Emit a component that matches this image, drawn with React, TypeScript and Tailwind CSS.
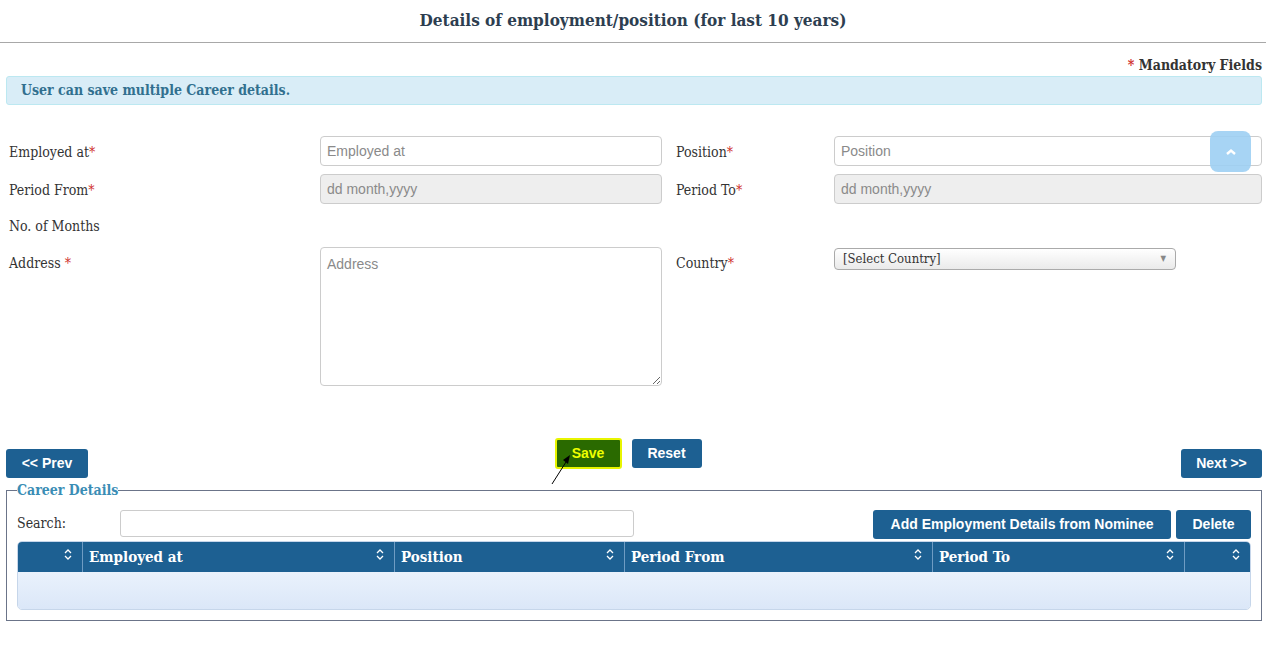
import React from "react";

const slab = "font-['DejaVu_Serif_Condensed','DejaVu_Serif',serif]";
const sans = "font-['Liberation_Sans',Arial,sans-serif]";

/** 必須マーク */
function Req() {
  return <span className="text-[#d0312d]">*</span>;
}

/** テーブル見出しのソートアイコン */
function SortIcon() {
  return (
    <svg width="8" height="11" viewBox="0 0 8 11" className="shrink-0">
      <path d="M1 4 L4 1 L7 4" fill="none" stroke="white" strokeWidth="1.3" />
      <path d="M1 7 L4 10 L7 7" fill="none" stroke="white" strokeWidth="1.3" />
    </svg>
  );
}

function Label({ children, inset = true }: { children: React.ReactNode; inset?: boolean }) {
  return (
    <div className={`${inset ? "pl-[3px]" : ""} pt-[7px] text-[14px] leading-[18px] text-[#333]`}>{children}</div>
  );
}

const inputCls = `h-[30px] w-full rounded-[4px] border border-[#ccc] px-[6px] text-[14px] text-[#555] placeholder:text-[#8a8a8a] ${sans}`;

const columns = [
  { title: "", w: "w-[65px]" },
  { title: "Employed at", w: "w-[312px]" },
  { title: "Position", w: "w-[230px]" },
  { title: "Period From", w: "w-[308px]" },
  { title: "Period To", w: "w-[252px]" },
  { title: "", w: "flex-1" },
];

export default function App() {
  return (
    <div className={`relative min-h-[645px] w-full bg-white ${slab}`}>
      {/* タイトル */}
      <div className="flex h-[43px] items-center justify-center border-b border-[#a8a8a8]">
        <h1 className="text-[17px] font-bold text-[#2d3e50]">Details of employment/position (for last 10 years)</h1>
      </div>

      <div className="pl-[6px] pr-[4px]">
        <div className="mt-[13px] text-right text-[14px] font-bold leading-[18px] text-[#333]">
          <Req /> Mandatory Fields
        </div>

        {/* 案内 */}
        <div className="mt-[2px] flex h-[29px] items-center rounded-[3px] border border-[#bce8f1] bg-[#d9edf7] pl-[14px] text-[14px] font-bold text-[#31708f]">
          User can save multiple Career details.
        </div>

        {/* フォーム */}
        <div className="mt-[31px] grid grid-cols-[314px_342px_14px_158px_428px] items-start gap-y-[8px]">
          <Label>
            Employed at<Req />
          </Label>
          <input className={inputCls} placeholder="Employed at" />
          <div />
          <Label inset={false}>
            Position<Req />
          </Label>
          <input className={inputCls} placeholder="Position" />

          <Label>
            Period From<Req />
          </Label>
          <input className={`${inputCls} bg-[#eee]`} placeholder="dd month,yyyy" disabled />
          <div />
          <Label inset={false}>
            Period To<Req />
          </Label>
          <input className={`${inputCls} bg-[#eee]`} placeholder="dd month,yyyy" disabled />

          <div className="col-span-5 h-[27px] pl-[3px] pt-[5px] text-[14px] leading-[18px] text-[#333]">No. of Months</div>

          <Label>
            Address <Req />
          </Label>
          <textarea
            className={`h-[139px] w-full resize-y rounded-[4px] border border-[#ccc] px-[6px] pt-[6px] text-[14px] placeholder:text-[#8a8a8a] ${sans}`}
            placeholder="Address"
          />
          <div />
          <Label inset={false}>
            Country<Req />
          </Label>
          <div className="pt-[1px]">
            <div className="flex h-[22px] w-[342px] items-center justify-between rounded-[4px] border border-[#aaa] bg-gradient-to-b from-white to-[#eaeaea] pl-[8px] pr-[9px] text-[13px] text-[#333]">
              <span>[Select Country]</span>
              <span className="text-[8px] text-[#888]">▼</span>
            </div>
          </div>
        </div>

        {/* ボタン */}
        <div className={`mt-[52px] grid grid-cols-[1fr_auto_1fr] items-end ${sans}`}>
          <div>
            <button className="h-[29px] w-[82px] rounded-[3px] bg-[#1d6092] text-[14px] font-bold text-white">&lt;&lt; Prev</button>
          </div>
          <div className="relative mb-[9px] mr-[12px] flex gap-[10px]">
            <button className="h-[31px] w-[67px] rounded-[3px] border-2 border-[#e8f500] bg-[#2a6a00] text-[14px] font-bold text-[#eeff00]">
              Save
            </button>
            <button className="mt-[1px] h-[29px] w-[70px] rounded-[3px] bg-[#1d6092] text-[14px] font-bold text-white">Reset</button>
            {/* カーソル矢印 */}
            <svg className="absolute left-[-4px] top-[12px]" width="30" height="36" viewBox="0 0 30 36">
              <line x1="1" y1="34" x2="15" y2="12" stroke="black" strokeWidth="1" />
              <path d="M19 5 L12 10 L17 14 Z" fill="black" />
            </svg>
          </div>
          <div className="flex justify-end">
            <button className="h-[29px] w-[81px] rounded-[3px] bg-[#1d6092] text-[14px] font-bold text-white">Next &gt;&gt;</button>
          </div>
        </div>

        {/* 経歴一覧 */}
        <fieldset className="mt-[4px] border border-[#6b7489] px-[10px] pb-[10px]">
          <legend className="text-[14px] font-bold leading-[16px] text-[#3a8db5]">Career Details</legend>
          <div className="mt-[9px] flex items-center">
            <span className="w-[103px] text-[14px] text-[#333]">Search:</span>
            <input className={`h-[27px] w-[514px] rounded-[3px] border border-[#ccc] ${sans}`} />
            <div className={`ml-auto flex gap-[5px] pt-[3px] ${sans}`}>
              <button className="h-[29px] w-[298px] rounded-[3px] bg-[#1d6092] text-[14px] font-bold text-white">
                Add Employment Details from Nominee
              </button>
              <button className="h-[29px] w-[75px] rounded-[3px] bg-[#1d6092] text-[14px] font-bold text-white">Delete</button>
            </div>
          </div>
          <div className="mt-[2px] overflow-hidden rounded-[5px] border border-[#c6d6ea]">
            <div className="flex h-[30px] bg-[#1d6092] text-[15px] font-bold text-white">
              {columns.map((c, i) => (
                <div
                  key={i}
                  className={`${c.w} flex items-center justify-between pl-[6px] pr-[10px] ${i < columns.length - 1 ? "border-r border-[#6f9cc3]" : ""}`}
                >
                  <span>{c.title}</span>
                  <span className="-mt-[6px]">
                    <SortIcon />
                  </span>
                </div>
              ))}
            </div>
            <div className="h-[37px] bg-gradient-to-b from-[#eaf2fc] to-[#dbe7f8]" />
          </div>
        </fieldset>
      </div>

      {/* ページトップへ */}
      <button className="absolute left-[1210px] top-[131px] flex h-[41px] w-[41px] items-center justify-center rounded-[8px] bg-[#9dcff3]/90">
        <svg width="12" height="8" viewBox="0 0 12 8">
          <path d="M2 6 L6 2.5 L10 6" fill="none" stroke="white" strokeWidth="2.4" />
        </svg>
      </button>
    </div>
  );
}
